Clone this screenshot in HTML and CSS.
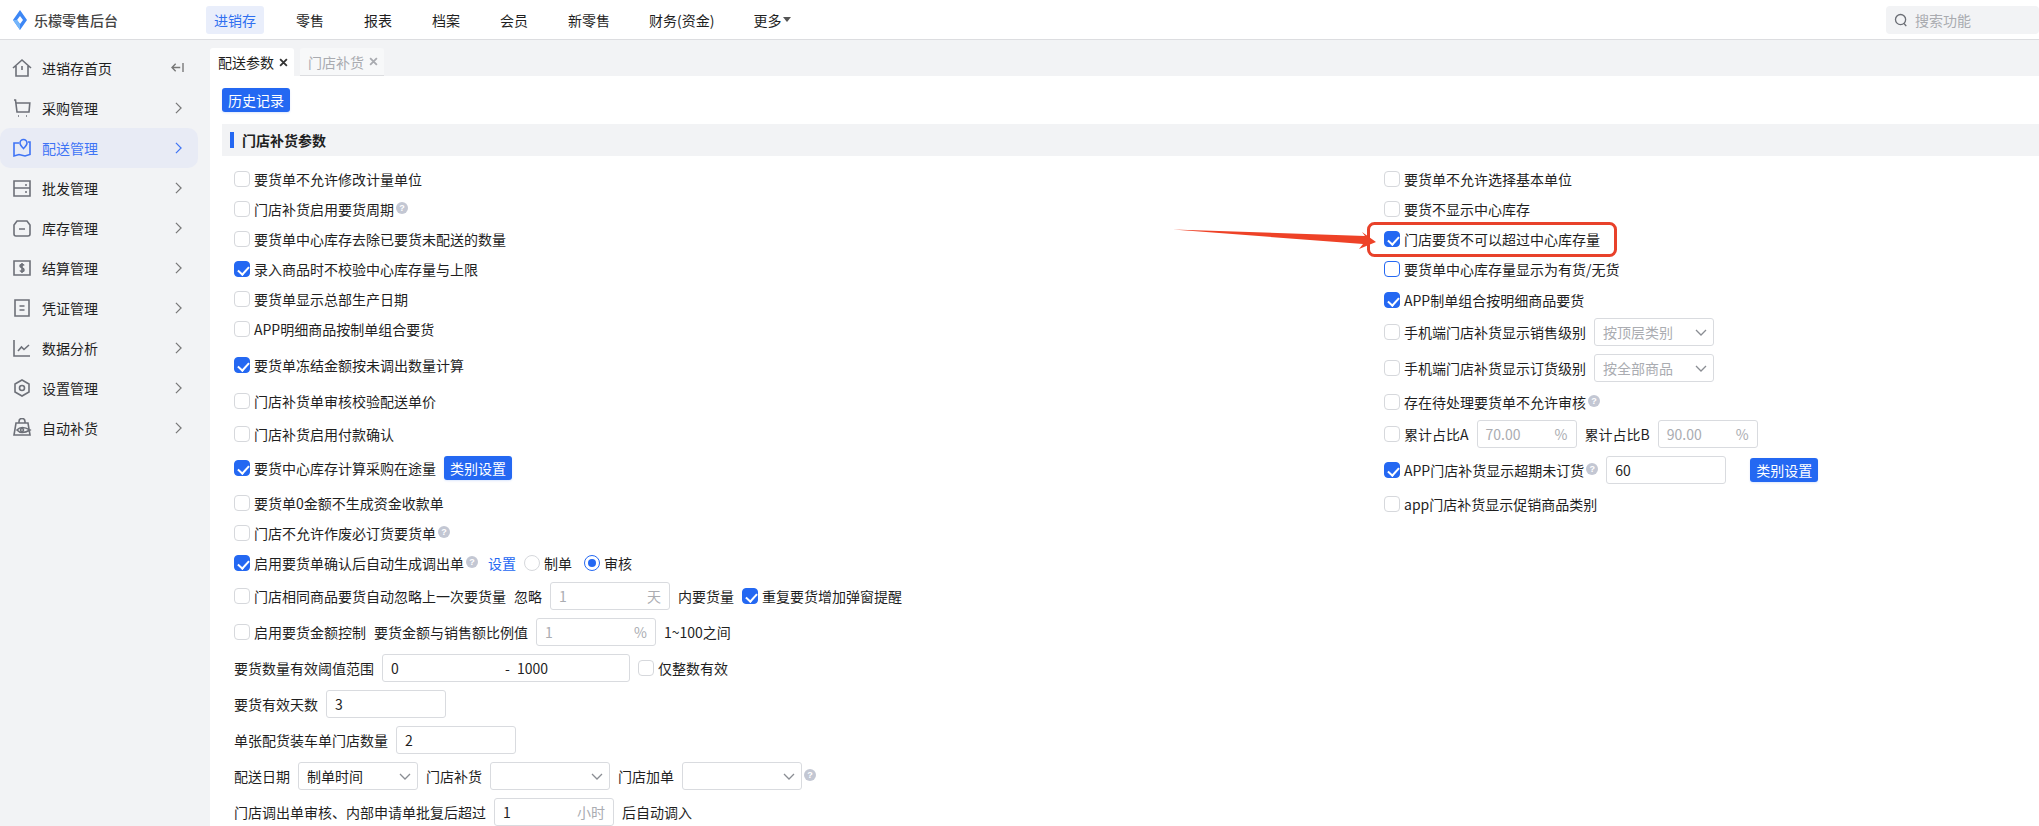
FILE: index.html
```html
<!DOCTYPE html>
<html lang="zh-CN">
<head>
<meta charset="utf-8">
<title>配送参数</title>
<link rel="stylesheet" href="styles.css">
</head>
<body>
<header class="topbar">
  <div class="brand">
    <svg class="brand-mark" viewBox="0 0 14 20"><path fill="#3d87f5" fill-rule="evenodd" d="M7 0 14 10 7 20 0 10ZM7 6 4 10 7 14 10 10Z"/><path fill="#74b6fb" d="M0 10 4 10 7 14 7 20Z"/></svg>
    <span>乐檬零售后台</span>
  </div>
  <nav class="nav">
    <a class="nav-item active">进销存</a>
    <a class="nav-item">零售</a>
    <a class="nav-item">报表</a>
    <a class="nav-item">档案</a>
    <a class="nav-item">会员</a>
    <a class="nav-item">新零售</a>
    <a class="nav-item finance">财务(资金)</a>
    <a class="nav-item">更多<i class="caret"></i></a>
  </nav>
  <div class="search">
    <svg class="search-icon" viewBox="0 0 16 16"><circle cx="7.5" cy="7.5" r="5.8"/><path d="M11.5 12 14 15"/></svg>
    <span>搜索功能</span>
  </div>
</header>

<div class="app">
  <aside class="sidebar">
    <a class="side-item">
      <svg class="side-icon" viewBox="0 0 20 20"><path d="M1 10 10 2l9 8M4 8v10h12V8M10 8v4"/></svg>
      <span>进销存首页</span>
      <svg class="collapse" viewBox="0 0 14 12"><path d="M13 1v10M10 6H1M5 2 1 6l4 4"/></svg>
    </a>
    <a class="side-item">
      <svg class="side-icon" viewBox="0 0 20 20"><path d="M2 2h1.5L5 14h12l.8-9H4M6 18h1M14 18h1"/></svg>
      <span>采购管理</span>
      <svg class="chev" viewBox="0 0 8 14"><path d="M1 1l6 6-6 6"/></svg>
    </a>
    <a class="side-item active">
      <svg class="side-icon" viewBox="0 0 20 20"><path d="M7 5H2v13l5-1.500 6 1.500 5-1.500V4h-2M11.500 10.500C9.500 8.500 8 7 8 5a3.500 3.500 0 0 1 7 0c0 2-1.500 3.500-3.500 5.500Z"/></svg>
      <span>配送管理</span>
      <svg class="chev" viewBox="0 0 8 14"><path d="M1 1l6 6-6 6"/></svg>
    </a>
    <a class="side-item">
      <svg class="side-icon" viewBox="0 0 20 20"><path d="M2 3h16v15H2ZM2 10h16M13 7h2M13 14h2"/></svg>
      <span>批发管理</span>
      <svg class="chev" viewBox="0 0 8 14"><path d="M1 1l6 6-6 6"/></svg>
    </a>
    <a class="side-item">
      <svg class="side-icon" viewBox="0 0 20 20"><path d="M5 3h10l3 4v9a2 2 0 0 1-2 2H4a2 2 0 0 1-2-2V7ZM7 11h6"/></svg>
      <span>库存管理</span>
      <svg class="chev" viewBox="0 0 8 14"><path d="M1 1l6 6-6 6"/></svg>
    </a>
    <a class="side-item">
      <svg class="side-icon" viewBox="0 0 20 20"><path d="M2 3h16v14H2ZM12 7.500C11.500 6.500 8 6 8 8c0 2 4 1.500 4 4 0 2-3.500 1.500-4 .5M10 5v10"/></svg>
      <span>结算管理</span>
      <svg class="chev" viewBox="0 0 8 14"><path d="M1 1l6 6-6 6"/></svg>
    </a>
    <a class="side-item">
      <svg class="side-icon" viewBox="0 0 20 20"><path d="M3 2h14v16H3ZM7.500 8h5M7.500 12h5"/></svg>
      <span>凭证管理</span>
      <svg class="chev" viewBox="0 0 8 14"><path d="M1 1l6 6-6 6"/></svg>
    </a>
    <a class="side-item">
      <svg class="side-icon" viewBox="0 0 20 20"><path d="M2 2v16h16M6 13l3.500-4 2.500 2.500 5-4.500"/></svg>
      <span>数据分析</span>
      <svg class="chev" viewBox="0 0 8 14"><path d="M1 1l6 6-6 6"/></svg>
    </a>
    <a class="side-item">
      <svg class="side-icon" viewBox="0 0 20 20"><path d="M10 2l7 4v8l-7 4-7-4V6Z"/><circle cx="10" cy="10" r="2.500"/></svg>
      <span>设置管理</span>
      <svg class="chev" viewBox="0 0 8 14"><path d="M1 1l6 6-6 6"/></svg>
    </a>
    <a class="side-item">
      <svg class="side-icon" viewBox="0 0 20 20"><path d="M7 5V3.500a3 3 0 0 1 6 0V5M4 5h12l2 12H2ZM5 12c3-3.500 7-3.500 13 0-6 3.500-10 3.500-13 0Z"/><circle cx="10" cy="12" r="1.500"/></svg>
      <span>自动补货</span>
      <svg class="chev" viewBox="0 0 8 14"><path d="M1 1l6 6-6 6"/></svg>
    </a>
  </aside>

  <main class="main">
    <div class="tabs">
      <div class="tab current">配送参数<svg class="tab-x" viewBox="0 0 8 8"><path d="M1 1l6 6M7 1 1 7"/></svg></div>
      <div class="tab">门店补货<svg class="tab-x" viewBox="0 0 8 8"><path d="M1 1l6 6M7 1 1 7"/></svg></div>
    </div>
    <div class="content">
      <button class="btn history">历史记录</button>
      <h2 class="section-title"><span>门店补货参数</span></h2>
      <div class="columns">
        <div class="col col-left">
          <div class="row"><i class="cb"></i><span>要货单不允许修改计量单位</span></div>
          <div class="row"><i class="cb"></i><span>门店补货启用要货周期</span><i class="help">?</i></div>
          <div class="row"><i class="cb"></i><span>要货单中心库存去除已要货未配送的数量</span></div>
          <div class="row"><i class="cb on"></i><span>录入商品时不校验中心库存量与上限</span></div>
          <div class="row"><i class="cb"></i><span>要货单显示总部生产日期</span></div>
          <div class="row"><i class="cb"></i><span>APP明细商品按制单组合要货</span></div>
          <div class="row"><i class="cb on"></i><span>要货单冻结金额按未调出数量计算</span></div>
          <div class="row"><i class="cb"></i><span>门店补货单审核校验配送单价</span></div>
          <div class="row"><i class="cb"></i><span>门店补货启用付款确认</span></div>
          <div class="row"><i class="cb on"></i><span>要货中心库存计算采购在途量</span><button class="btn after">类别设置</button></div>
          <div class="row"><i class="cb"></i><span>要货单0金额不生成资金收款单</span></div>
          <div class="row"><i class="cb"></i><span>门店不允许作废必订货要货单</span><i class="help">?</i></div>
          <div class="row"><i class="cb on"></i><span>启用要货单确认后自动生成调出单</span><i class="help">?</i><a class="link">设置</a><i class="radio"></i><span class="radio-label">制单</span><i class="radio on"></i><span class="radio-label">审核</span></div>
          <div class="row"><i class="cb"></i><span>门店相同商品要货自动忽略上一次要货量</span><span class="sp">忽略</span><div class="field w120 muted"><span>1</span><span>天</span></div><span class="sp">内要货量</span><i class="cb on sp"></i><span>重复要货增加弹窗提醒</span></div>
          <div class="row"><i class="cb"></i><span>启用要货金额控制</span><span class="sp">要货金额与销售额比例值</span><div class="field w120 muted"><span>1</span><span>%</span></div><span class="sp">1~100之间</span></div>
          <div class="row"><span>要货数量有效阈值范围</span><div class="field w248 range"><span class="range-a">0</span><span class="range-b">-</span><span>1000</span></div><i class="cb sp"></i><span>仅整数有效</span></div>
          <div class="row"><span>要货有效天数</span><div class="field w120"><span>3</span></div></div>
          <div class="row"><span>单张配货装车单门店数量</span><div class="field w120"><span>2</span></div></div>
          <div class="row"><span>配送日期</span><div class="field w120"><span>制单时间</span><svg class="select-chev" viewBox="0 0 12 7"><path d="M1 1l5 5 5-5"/></svg></div><span class="sp">门店补货</span><div class="field w120 empty"><svg class="select-chev" viewBox="0 0 12 7"><path d="M1 1l5 5 5-5"/></svg></div><span class="sp">门店加单</span><div class="field w120 empty"><svg class="select-chev" viewBox="0 0 12 7"><path d="M1 1l5 5 5-5"/></svg></div><i class="help">?</i></div>
          <div class="row"><span>门店调出单审核、内部申请单批复后超过</span><div class="field w120"><span>1</span><span class="unit">小时</span></div><span class="sp">后自动调入</span></div>
        </div>
        <div class="col col-right">
          <div class="row"><i class="cb"></i><span>要货单不允许选择基本单位</span></div>
          <div class="row"><i class="cb"></i><span>要货不显示中心库存</span></div>
          <div class="row"><i class="cb on"></i><span>门店要货不可以超过中心库存量</span></div>
          <div class="row"><i class="cb focus"></i><span>要货单中心库存量显示为有货/无货</span></div>
          <div class="row"><i class="cb on"></i><span>APP制单组合按明细商品要货</span></div>
          <div class="row"><i class="cb"></i><span>手机端门店补货显示销售级别</span><div class="field w120 muted"><span>按顶层类别</span><svg class="select-chev" viewBox="0 0 12 7"><path d="M1 1l5 5 5-5"/></svg></div></div>
          <div class="row"><i class="cb"></i><span>手机端门店补货显示订货级别</span><div class="field w120 muted"><span>按全部商品</span><svg class="select-chev" viewBox="0 0 12 7"><path d="M1 1l5 5 5-5"/></svg></div></div>
          <div class="row"><i class="cb"></i><span>存在待处理要货单不允许审核</span><i class="help">?</i></div>
          <div class="row"><i class="cb"></i><span>累计占比A</span><div class="field w100 muted"><span>70.00</span><span>%</span></div><span class="sp">累计占比B</span><div class="field w100 muted"><span>90.00</span><span>%</span></div></div>
          <div class="row"><i class="cb on"></i><span>APP门店补货显示超期未订货</span><i class="help">?</i><div class="field w120 tail"><span>60</span></div><button class="btn after far">类别设置</button></div>
          <div class="row"><i class="cb"></i><span>app门店补货显示促销商品类别</span></div>
        </div>
      </div>
    </div>
  </main>
</div>

<svg class="annotation" viewBox="0 0 2039 826">
  <rect class="mark-box" x="1368.500" y="223.500" width="247" height="32" rx="6"/>
  <polygon class="mark-arrow" points="1173,229.500 1365,236 1362,232 1376,242 1359,249 1363,244"/>
</svg>
</body>
</html>
```
FILE: styles.css
```css
* { box-sizing: border-box; }
html, body { margin: 0; height: 826px; overflow: hidden; }
body {
  position: relative;
  background: #fff;
  color: #1f1f1f;
  font: 14px/20px "Noto Sans CJK SC", "Microsoft YaHei", sans-serif;
}
i { font-style: normal; }

/* top bar */
.topbar {
  display: flex;
  align-items: center;
  height: 40px;
  border-bottom: 1px solid #dcdde0;
  background: #fff;
}
.brand {
  display: flex;
  align-items: center;
  gap: 7px;
  width: 214px;
  padding-left: 13px;
  color: #444;
  font-weight: 500;
}
.brand-mark { width: 14px; height: 20px; }
.nav { display: flex; align-items: center; gap: 40px; }
.nav-item { line-height: 28px; color: #1f1f1f; display: flex; align-items: center; }
.nav-item.active {
  margin: 0 -8px;
  padding: 0 8px;
  border-radius: 3px;
  background: #e9eefb;
  color: #2f6ff0;
}
.nav-item.finance { margin: 0 -1px; }
.caret {
  margin-left: 2px;
  width: 0;
  height: 0;
  border: 4px solid transparent;
  border-top: 5px solid #555;
  border-bottom: 0;
}
.search {
  display: flex;
  align-items: center;
  gap: 7px;
  width: 153px;
  height: 28px;
  margin-left: auto;
  padding-left: 8px;
  border-radius: 4px;
  background: #f2f3f5;
  color: #a9abb0;
}
.search-icon { width: 14px; height: 16px; fill: none; stroke: #6b6e75; stroke-width: 1.500; }

/* shell */
.app { display: flex; height: 786px; }
.sidebar {
  flex: none;
  width: 210px;
  padding: 8px 12px 0 0;
  background: #f2f3f5;
}
.side-item {
  display: flex;
  align-items: center;
  height: 40px;
  padding: 0 16px 0 12px;
  border-radius: 10px;
  color: #1f1f1f;
}
.side-item.active { background: #e8ebf5; color: #3f74f5; }
.side-icon {
  flex: none;
  width: 20px;
  height: 20px;
  margin-right: 10px;
  fill: none;
  stroke: #6d7078;
  stroke-width: 1.600;
}
.active .side-icon { stroke: #3f74f5; }
.chev {
  width: 7px;
  height: 12px;
  margin-left: auto;
  fill: none;
  stroke: #777;
  stroke-width: 1.400;
}
.active .chev { stroke: #3f74f5; }
.collapse {
  width: 13px;
  height: 11px;
  margin: -1px -2px 0 auto;
  fill: none;
  stroke: #777;
  stroke-width: 1.500;
}

/* tabs */
.main { flex: 1; min-width: 0; display: flex; flex-direction: column; }
.tabs {
  display: flex;
  gap: 6px;
  height: 36px;
  padding-top: 8px;
  background: #f2f3f5;
}
.tab {
  display: flex;
  align-items: center;
  gap: 5px;
  width: 84px;
  padding-left: 8px;
  border-bottom: 1px solid #dcdde0;
  border-radius: 3px 3px 0 0;
  background: #f7f8f9;
  color: #a9abb0;
}
.tab.current { background: #fff; border-bottom: 0; color: #1f1f1f; }
.tab-x { width: 9px; height: 9px; fill: none; stroke: #a9abb0; stroke-width: 1.600; }
.current .tab-x { stroke: #333; }

/* content */
.content { flex: 1; min-height: 0; padding: 12px 0 0 12px; }
.btn {
  display: block;
  width: 68px;
  height: 24px;
  padding: 0;
  border: 0;
  border-radius: 3px;
  background: #2468f2;
  box-shadow: 0 1px 2px rgba(36, 104, 242, .15);
  color: #fff;
  font: inherit;
}
.section-title {
  display: flex;
  align-items: center;
  height: 32px;
  margin: 12px 0 9px;
  background: #f2f3f5;
  font-size: 14px;
  font-weight: 700;
}
.section-title span {
  padding-left: 8px;
  margin-left: 8px;
  line-height: 16px;
  border-left: 4px solid #2468f2;
}
.columns { display: flex; padding-left: 12px; }
.col { display: grid; align-items: start; }
.col-left {
  width: 1150px;
  grid-template-rows: 30px 30px 30px 30px 30px 36px 36px 33px 34px 35px 30px 30px 33px 36px 36px 36px 36px 36px 36px 28px;
}
.col-right {
  flex: 1;
  grid-template-rows: 30px 30px 30px 31px 32px 36px 34px 32px 36px 34px 28px;
}
.row {
  display: flex;
  align-items: center;
  gap: 8px;
  height: 28px;
  white-space: nowrap;
}

/* controls */
.cb {
  position: relative;
  flex: none;
  width: 16px;
  height: 16px;
  margin-right: -4px;
  border: 1px solid #d6d8dc;
  border-radius: 4px;
  background: #fff;
}
.cb.sp { margin-left: 0; }
.cb.focus { border-color: #2468f2; }
.cb.on { border-color: #2468f2; background: #2468f2; }
.cb.on::after {
  content: "";
  position: absolute;
  left: 4.500px;
  top: 1.500px;
  width: 5px;
  height: 9px;
  border: solid #fff;
  border-width: 0 2px 2px 0;
  transform: rotate(42deg);
}
.help {
  flex: none;
  width: 12px;
  height: 12px;
  margin: -2px 1px 0 -6px;
  border-radius: 50%;
  background: #c3c7d3;
  color: #fff;
  font: 700 9px/12px "Liberation Sans", sans-serif;
  text-align: center;
}
.link { margin-left: 1px; color: #2468f2; }
.radio {
  position: relative;
  flex: none;
  width: 16px;
  height: 16px;
  margin-right: -4px;
  border: 1px solid #d6d8dc;
  border-radius: 50%;
}
.radio.on { margin-left: 4px; border-color: #2468f2; }
.radio.on::after {
  content: "";
  position: absolute;
  inset: 3px;
  border-radius: 50%;
  background: #2468f2;
}
.field {
  flex: none;
  display: flex;
  align-items: center;
  justify-content: space-between;
  height: 28px;
  padding: 0 8px;
  border: 1px solid #d9dbdf;
  border-radius: 3px;
  background: #fff;
}
.w100 { width: 100px; padding-right: 8px; }
.w120 { width: 120px; }
.w248 { width: 248px; }
.muted { color: #aaacb1; }
.unit { color: #aaacb1; }
.empty { justify-content: flex-end; }
.range { justify-content: flex-start; }
.range-a { width: 114px; }
.range-b { width: 12px; }
.select-chev { width: 12px; height: 7px; margin-right: -2px; fill: none; stroke: #8a8d93; stroke-width: 1.300; }
.tail { margin-left: -1px; }
.far { margin-left: 16px; }

/* screenshot annotation drawn over the page */
.annotation {
  position: absolute;
  left: 0;
  top: 0;
  width: 2039px;
  height: 826px;
  pointer-events: none;
}
.mark-box { fill: none; stroke: #e8412a; stroke-width: 3; }
.mark-arrow { fill: #ee4227; }
```
